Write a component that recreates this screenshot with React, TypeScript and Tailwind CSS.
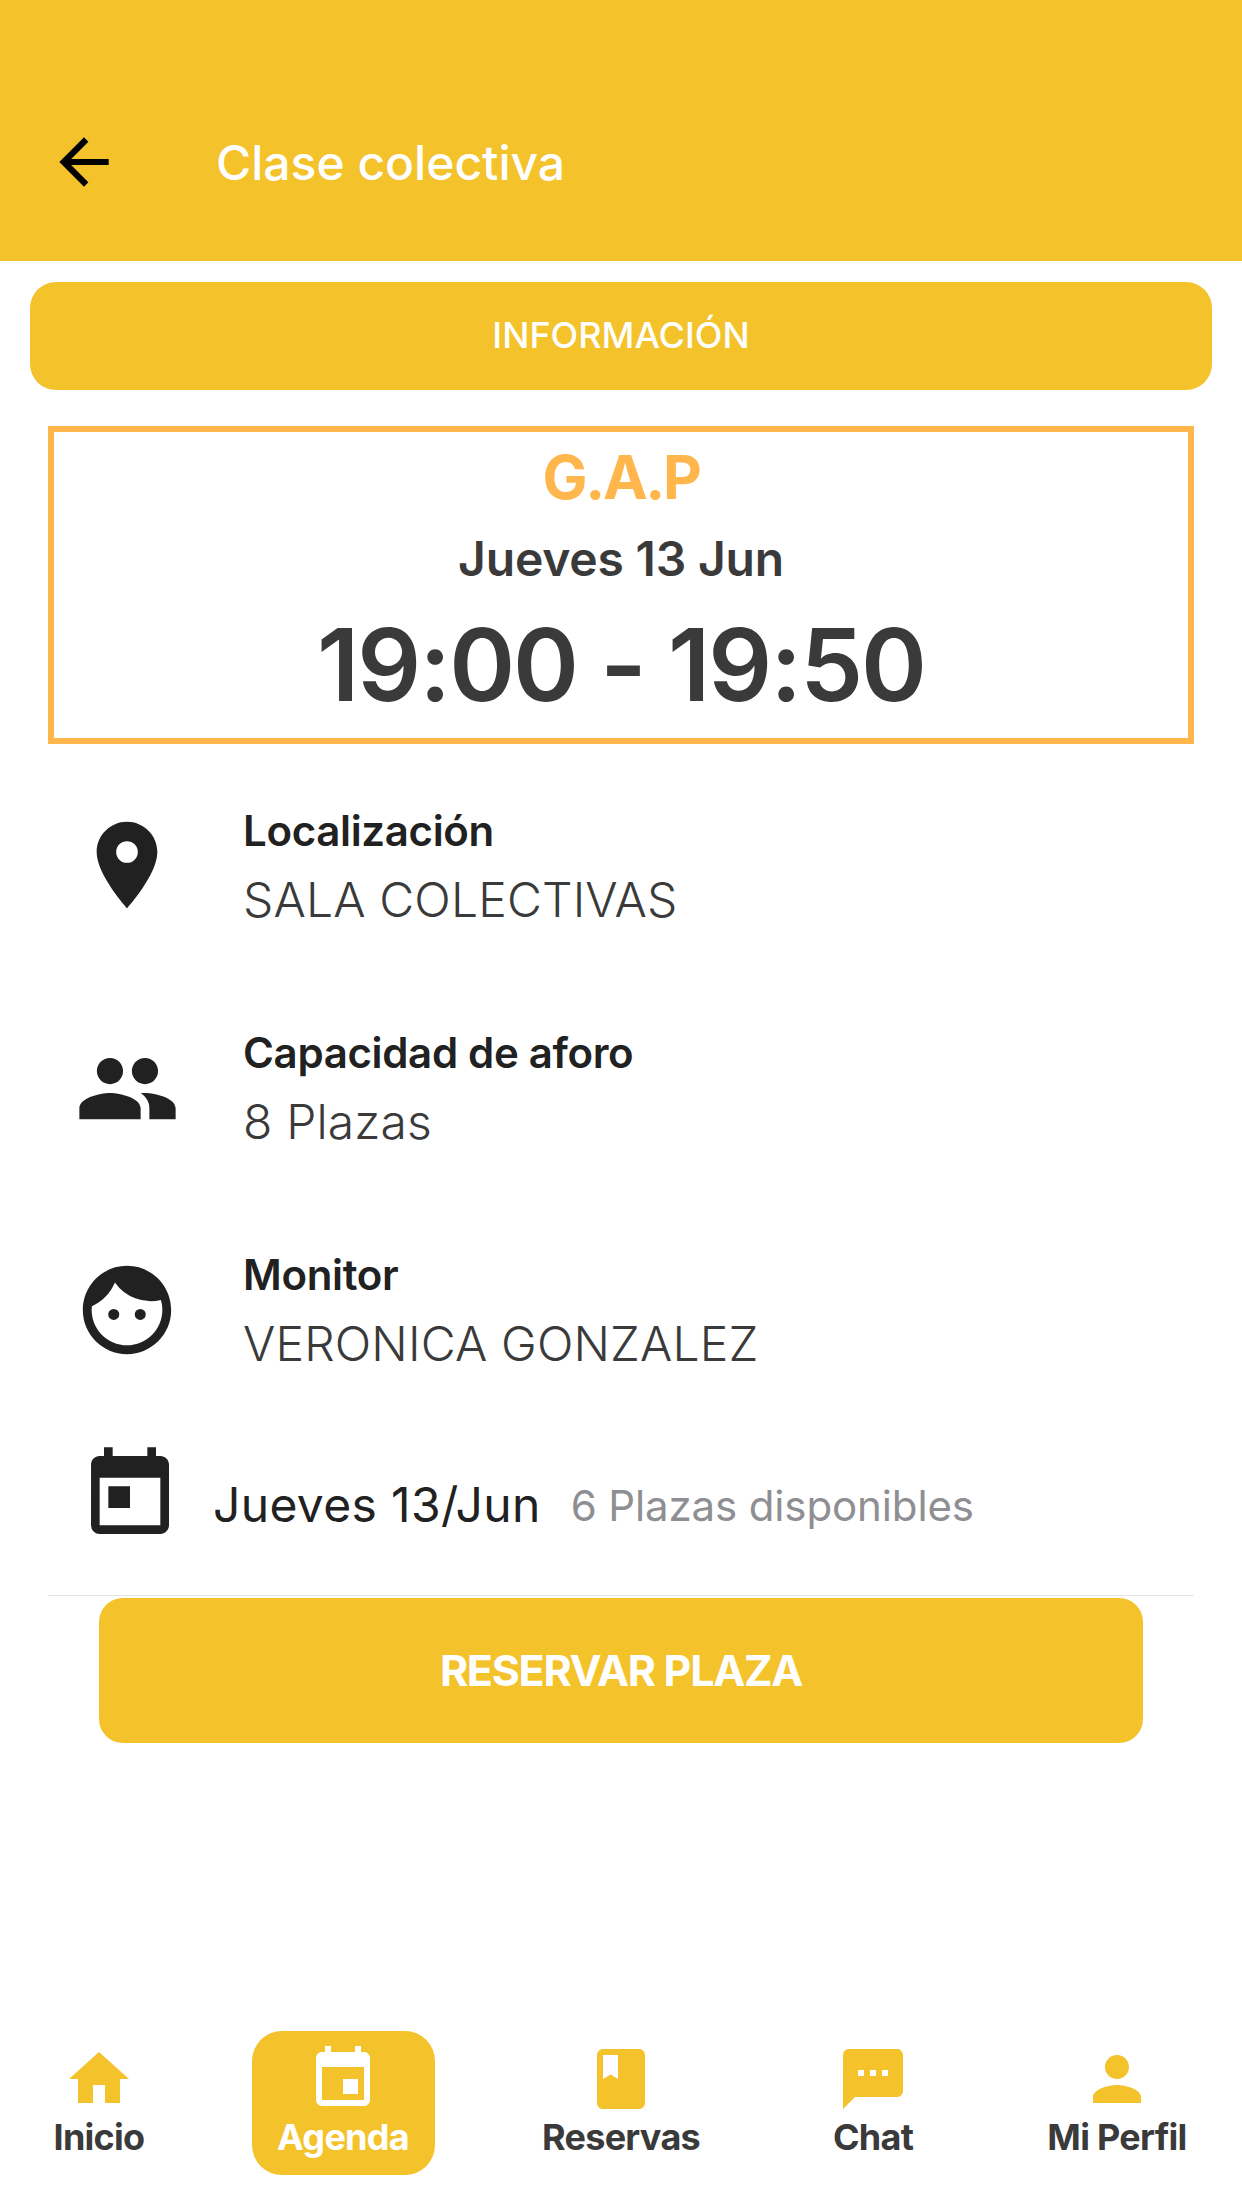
import { MdArrowBack, MdBook, MdEvent, MdFace, MdHome, MdLocationOn, MdPeople, MdPerson, MdSms, MdToday } from "react-icons/md";
import type { IconType } from "react-icons";

const details: { icon: IconType; iconClass: string; title: string; value: string; mt: string }[] = [
  { icon: MdLocationOn, iconClass: "text-[104px] -mt-[2px]", title: "Localización", value: "SALA COLECTIVAS", mt: "mt-[60px]" },
  { icon: MdPeople, iconClass: "text-[105px]", title: "Capacidad de aforo", value: "8 Plazas", mt: "mt-[98px]" },
  { icon: MdFace, iconClass: "text-[106px]", title: "Monitor", value: "VERONICA GONZALEZ", mt: "mt-[98px]" },
];

const tabs: { label: string; icon: IconType; width: string; active?: boolean }[] = [
  { label: "Inicio", icon: MdHome, width: "w-[198px]" },
  { label: "Agenda", icon: MdEvent, width: "w-[290px]", active: true },
  { label: "Reservas", icon: MdBook, width: "w-[266px]" },
  { label: "Chat", icon: MdSms, width: "w-[238px]" },
  { label: "Mi Perfil", icon: MdPerson, width: "w-[250px]" },
];

export default function App() {
  return (
    <div className="flex h-[2208px] w-[1242px] flex-col overflow-hidden bg-white font-['Inter',sans-serif] text-[#3a3a3a]">
      <header className="flex h-[261px] items-center bg-[#f4c22b] pt-[63px] pl-[47px]">
        <MdArrowBack className="text-[74px] text-black" />
        <h1 className="mt-[1px] ml-[95px] text-[48px] leading-[68px] font-medium text-white">Clase colectiva</h1>
      </header>

      <div className="mx-[30px] mt-[21px] flex h-[108px] items-center justify-center rounded-[26px] bg-[#f4c22b] pb-[2px] text-[36px] font-medium text-white">
        INFORMACIÓN
      </div>

      <section className="mx-[48px] mt-[36px] flex h-[318px] flex-col items-center border-[6px] border-[#ffb74d]">
        <p className="mt-[11px] text-[60px] leading-[68px] font-bold tracking-[-0.04em] text-[#ffb74d]">G.A.P</p>
        <p className="mt-[20px] text-[48px] leading-[56px] font-semibold tracking-[-0.004em]">Jueves 13 Jun</p>
        <p className="mt-[20px] text-[100px] leading-[116px] font-semibold tracking-[-0.02em]">19:00 - 19:50</p>
      </section>

      {details.map(({ icon: Icon, iconClass, title, value, mt }) => (
        <div key={title} className={`ml-[78px] flex items-center ${mt}`}>
          <div className="flex h-[124px] w-[98px] items-center justify-center">
            <Icon className={`shrink-0 text-[#212121] ${iconClass}`} />
          </div>
          <div className="ml-[67px]">
            <p className="text-[42px] leading-[54px] font-semibold tracking-[-0.008em] text-[#212121]">{title}</p>
            <p className="mt-[14px] text-[48px] leading-[56px] font-light tracking-[0.003em]">{value}</p>
          </div>
        </div>
      ))}

      <div className="mt-[71px] ml-[78px] flex items-start">
        <MdToday className="shrink-0 text-[104px] text-[#212121]" />
        <div className="mt-[33px] flex items-center">
          <span className="ml-[31px] text-[48px] leading-[56px] tracking-[0.007em] text-[#212121]">Jueves 13/Jun</span>
          <span className="mt-[2px] ml-[30px] text-[42px] leading-[56px] tracking-[-0.003em] text-[#8e8e93]">6 Plazas disponibles</span>
        </div>
      </div>

      <div className="mx-[48px] mt-[48px] h-px bg-[#e5e5e5]" />

      <button className="mx-[99px] mt-[2px] h-[145px] rounded-[24px] bg-[#f4c22b] text-[43px] font-bold tracking-[-0.03em] text-white">
        RESERVAR PLAZA
      </button>

      <nav className="mt-auto mb-[33px] flex items-center">
        {tabs.map(({ label, icon: Icon, width, active }) => (
          <div key={label} className={`flex justify-center ${width}`}>
            <div className={`flex h-[144px] w-[183px] flex-col items-center justify-center rounded-[30px] pb-[4px] ${active ? "bg-[#f4c22b] text-white" : "text-[#3a3a3a]"}`}>
              <Icon className={`text-[72px] ${active ? "text-white" : "text-[#f4c22b]"}`} />
              <span className="text-[36px] leading-[44px] font-bold tracking-[-0.02em] whitespace-nowrap">{label}</span>
            </div>
          </div>
        ))}
      </nav>
    </div>
  );
}
